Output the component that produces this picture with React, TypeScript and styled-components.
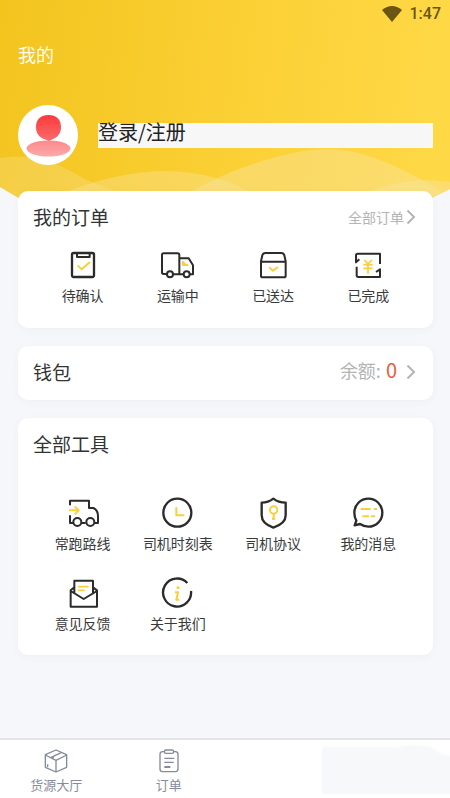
import React from "react";
import styled, { createGlobalStyle } from "styled-components";

const INK = "#2b2b2b";
const GOLD = "#fbce3b";

const GlobalStyle = createGlobalStyle`
  *, *::before, *::after { box-sizing: border-box; }
  body {
    margin: 0;
    background: #f6f7fa;
    color: #333;
    font-family: "Noto Sans CJK SC", "Noto Sans", sans-serif;
  }
  button { font: inherit; color: inherit; border: 0; padding: 0; background: none; cursor: pointer; }
  a { color: inherit; text-decoration: none; }
  h1, h2, ul { margin: 0; padding: 0; font-weight: 400; list-style: none; }
  svg { display: block; flex: none; }
`;

const Page = styled.div`
  min-height: 100vh;
  display: flex;
  flex-direction: column;
  position: relative;
  isolation: isolate;
`;

const Backdrop = styled.svg`
  position: absolute;
  top: 0;
  left: 0;
  width: 100%;
  height: 200px;
  z-index: -1;
`;

const Header = styled.header`
  padding: 0 17px 0 18px;
`;

const StatusBar = styled.div`
  height: 28px;
  margin-right: -8px;
  display: flex;
  align-items: center;
  justify-content: flex-end;
  gap: 8px;
  color: #6b5512;
  font: 500 16px/28px Roboto, sans-serif;
`;

const PageTitle = styled.h1`
  margin-top: 14px;
  font-size: 18px;
  line-height: 24px;
  color: #fffdf0;
`;

const Profile = styled.div`
  margin-top: 39px;
  display: flex;
  align-items: center;
  gap: 20px;
`;

const LoginButton = styled.button`
  flex: 1;
  height: 25px;
  display: flex;
  align-items: flex-start;
  background: #f7f7f7;
  color: #222;
  font-size: 20px;
  line-height: 18px;
`;

const Content = styled.main`
  flex: 1;
  padding: 26px 17px 18px 18px;
  display: flex;
  flex-direction: column;
  gap: 18px;
`;

const Card = styled.section<{ $bottom: number }>`
  padding: 13px 15px ${(p) => p.$bottom}px;
  border-radius: 10px;
  background: #fff;
  box-shadow: 0 2px 8px rgba(60, 70, 90, 0.04);
`;

const CardHead = styled.div`
  display: flex;
  justify-content: space-between;
`;

const CardTitle = styled.h2`
  font-size: 19px;
  line-height: 26px;
  color: #333;
`;

const MoreLink = styled.a<{ $gap: number }>`
  display: flex;
  align-items: center;
  gap: ${(p) => p.$gap}px;
  color: #b4b4b4;
  font-size: 14px;
`;

const Balance = styled.span`
  align-self: flex-start;
  display: flex;
  gap: 5px;
  font-size: 18px;
  line-height: 22px;
`;

const Amount = styled.span`
  color: #ec5b3e;
  font-size: 20px;
`;

const ShortcutGrid = styled.ul<{ $top: number }>`
  margin: ${(p) => p.$top}px 2px 0;
  display: grid;
  grid-template-columns: repeat(4, 1fr);
  row-gap: 24px;
`;

const Shortcut = styled.button`
  width: 100%;
  display: flex;
  flex-direction: column;
  align-items: center;
  gap: 4px;
  font-size: 14px;
  line-height: 18px;
  color: #3a3a3a;
  white-space: nowrap;
`;

const TabBar = styled.nav`
  position: relative;
  height: 60px;
  border-top: 2px solid #e3e5e8;
  background: #fff;
  display: grid;
  grid-template-columns: repeat(4, 1fr);
`;

const Tab = styled.a`
  padding-top: 9px;
  display: flex;
  flex-direction: column;
  align-items: center;
  gap: 2px;
  color: #858b9a;
  font-size: 13px;
  line-height: 20px;
`;

const TabHaze = styled.svg`
  position: absolute;
  top: 4px;
  right: 0;
  width: 30%;
  height: 54px;
`;

function Glyph({ children }: { children: React.ReactNode }) {
  return (
    <svg width="34" height="34" viewBox="0 0 102 102" fill="none" stroke={INK} strokeWidth="7" strokeLinejoin="round" aria-hidden="true">
      {children}
    </svg>
  );
}

function Chevron() {
  return (
    <svg width="12" height="16" viewBox="0 0 12 16" fill="none" stroke="#b4b4b4" strokeWidth="2" aria-hidden="true">
      <path d="M1.5 1.5 8 8l-6.500 6.500" />
    </svg>
  );
}

const orders = [
  {
    label: "待确认",
    icon: (
      <Glyph>
        <rect x="18" y="15" width="66" height="72" rx="5" />
        <path d="M33 15v12h38V15" strokeWidth="6" />
        <path d="M35 52l12 12 25-22" stroke={GOLD} strokeWidth="6" />
      </Glyph>
    ),
  },
  {
    label: "运输中",
    icon: (
      <Glyph>
        <path d="M18 78H8q-5 0-5-5V21q0-5 5-5h42q5 0 5 5v57M36 79h32M55 31h28l13 21v27h-9" strokeWidth="6" />
        <circle cx="27" cy="79" r="9" strokeWidth="6" />
        <circle cx="77" cy="79" r="9" strokeWidth="6" />
        <path d="M66 39v12h16" stroke={GOLD} strokeWidth="6" />
        <path d="M66 39l13 12H66z" fill={GOLD} stroke="none" />
      </Glyph>
    ),
  },
  {
    label: "已送达",
    icon: (
      <Glyph>
        <path d="M15 40l4-18q2-7 9-7h48q7 0 9 7l4 18v43q0 5-5 5H20q-5 0-5-5zM15 41h74" strokeWidth="6" />
        <path d="M40 58l11 10 15-11" stroke={GOLD} strokeWidth="6" />
      </Glyph>
    ),
  },
  {
    label: "已完成",
    icon: (
      <Glyph>
        <path d="M25 34L15 43V22q0-5 5-5h67v31M17 56v26q0 5 5 5h65V64L75 72" strokeWidth="6" />
        <path d="M40 36l11 12 12-12M37 50h28M37 61h28M51 48v29" stroke={GOLD} strokeWidth="5" />
      </Glyph>
    ),
  },
];

const tools = [
  {
    label: "常跑路线",
    icon: (
      <Glyph>
        <path d="M12 28V14h57v22h13q14 6 14 24v21h-9M12 58v23h9M47 81h12" strokeWidth="6" />
        <circle cx="34" cy="78" r="12" strokeWidth="6" />
        <circle cx="73" cy="78" r="12" strokeWidth="6" />
        <path d="M9 43h27M26 31l12 12-12 12" stroke={GOLD} strokeWidth="6" />
      </Glyph>
    ),
  },
  {
    label: "司机时刻表",
    icon: (
      <Glyph>
        <circle cx="49" cy="50" r="42" />
        <path d="M46 34v24h24" stroke={GOLD} strokeWidth="6" />
      </Glyph>
    ),
  },
  {
    label: "司机协议",
    icon: (
      <Glyph>
        <path d="M52 8Q37 20 17 20v38q0 25 35 37 37-12 37-37V20Q67 20 52 8z" />
        <circle cx="53" cy="42" r="11" stroke={GOLD} strokeWidth="6" />
        <path d="M53 53v19M48 68h9" stroke={GOLD} strokeWidth="6" />
      </Glyph>
    ),
  },
  {
    label: "我的消息",
    icon: (
      <Glyph>
        <path d="M27 84q12 8 25 8a42 42 0 1 0-42-42q0 13 6 24l-5 14z" />
        <path d="M29 39h30M69 39h9M34 61h20M60 61h12" stroke={GOLD} strokeWidth="6" />
      </Glyph>
    ),
  },
  {
    label: "意见反馈",
    icon: (
      <Glyph>
        <path d="M25 51V14h56v37M25 34L14 43v49h79V43L81 34M14 45l39 24 40-24" strokeWidth="6" />
        <path d="M36 32h32M36 43h20" stroke={GOLD} strokeWidth="5" />
      </Glyph>
    ),
  },
  {
    label: "关于我们",
    icon: (
      <Glyph>
        <path d="M79 21A42 42 0 1 0 90 45" />
        <path d="M51 31v8" stroke={GOLD} strokeWidth="8" />
        <path d="M42 49h9l-5 22h9" stroke={GOLD} strokeWidth="6" />
      </Glyph>
    ),
  },
];

function Shortcuts({ items, top }: { items: typeof orders; top: number }) {
  return (
    <ShortcutGrid $top={top}>
      {items.map((item) => (
        <li key={item.label}>
          <Shortcut type="button">
            {item.icon}
            {item.label}
          </Shortcut>
        </li>
      ))}
    </ShortcutGrid>
  );
}

function Waves() {
  return (
    <Backdrop viewBox="0 0 450 200" preserveAspectRatio="none" aria-hidden="true">
      <defs>
        <linearGradient id="sun" x1="0" y1="0" x2="1" y2="0.05">
          <stop offset="0" stopColor="#f3c41e" />
          <stop offset="0.55" stopColor="#fbd035" />
          <stop offset="1" stopColor="#ffd846" />
        </linearGradient>
        <clipPath id="edge">
          <path d="M0 0h450v189l-22 11H22L0 187z" />
        </clipPath>
      </defs>
      <g clipPath="url(#edge)">
        <path d="M0 0h450v200H0z" fill="url(#sun)" />
        <g fill="#f8e7a8">
          <path d="M0 158C40 152 66 168 85 179q15 8 40 15v6H0z" fillOpacity="0.28" />
          <path d="M58 195C95 180 130 171 165 171s65 9 90 24z" fillOpacity="0.35" />
          <path d="M185 195C230 168 290 149 328 149c38 0 85 24 118 45v6H185z" fillOpacity="0.4" />
          <path d="M360 196c25-12 55-19 90-14v18h-90z" fillOpacity="0.4" />
        </g>
      </g>
    </Backdrop>
  );
}

function Avatar() {
  return (
    <svg width="60" height="60" viewBox="0 0 60 60" role="img" aria-label="头像">
      <defs>
        <linearGradient id="head" x1="0" y1="0" x2="0" y2="1">
          <stop offset="0" stopColor="#fb3a3c" />
          <stop offset="1" stopColor="#fb6b6c" />
        </linearGradient>
        <linearGradient id="body" x1="0" y1="0" x2="0" y2="1">
          <stop offset="0" stopColor="#fb8a8c" />
          <stop offset="1" stopColor="#fca9aa" />
        </linearGradient>
      </defs>
      <circle cx="30" cy="30" r="30" fill="#fff" />
      <ellipse cx="30.500" cy="43.500" rx="22" ry="8" fill="url(#body)" />
      <path d="M18 22C18 14 23 10 30.500 10S43 14 43 22c0 6-3 10-8 12l-4 2-5-2c-5-2-8-6-8-12z" fill="url(#head)" />
    </svg>
  );
}

export default function App() {
  return (
    <Page>
      <GlobalStyle />
      <Waves />
      <Header>
        <StatusBar>
          <svg width="20" height="16" viewBox="0 0 20 16" fill="currentColor" aria-hidden="true">
            <path d="M0 4Q10-4 20 4L10 16z" />
          </svg>
          <span>1:47</span>
        </StatusBar>
        <PageTitle>我的</PageTitle>
        <Profile>
          <Avatar />
          <LoginButton type="button">登录/注册</LoginButton>
        </Profile>
      </Header>

      <Content>
        <Card $bottom={24}>
          <CardHead>
            <CardTitle>我的订单</CardTitle>
            <MoreLink href="#orders" $gap={2}>
              全部订单
              <Chevron />
            </MoreLink>
          </CardHead>
          <Shortcuts items={orders} top={18} />
        </Card>

        <Card $bottom={15}>
          <CardHead>
            <CardTitle>钱包</CardTitle>
            <MoreLink href="#wallet" $gap={9}>
              <Balance>
                余额: <Amount>0</Amount>
              </Balance>
              <Chevron />
            </MoreLink>
          </CardHead>
        </Card>

        <Card $bottom={23}>
          <CardTitle>全部工具</CardTitle>
          <Shortcuts items={tools} top={39} />
        </Card>
      </Content>

      <TabBar>
        <Tab href="#cargo">
          <svg width="24" height="24" viewBox="0 0 72 72" fill="none" stroke="currentColor" strokeWidth="4" strokeLinejoin="round" aria-hidden="true">
            <path d="M36 3l32 14v38L36 69 4 55V17zM4 18l32 16 32-16M36 34v35M11 46v8" />
            <path d="M20 10M20 26l32-15M27 29q-1-7 8-11" />
          </svg>
          货源大厅
        </Tab>
        <Tab href="#my-orders">
          <svg width="24" height="24" viewBox="0 0 72 72" fill="none" stroke="currentColor" strokeWidth="4" strokeLinejoin="round" aria-hidden="true">
            <path d="M22 8h-5q-8 0-8 8v44q0 8 8 8h38q8 0 8-8V16q0-8-8-8h-5" />
            <rect x="22" y="3" width="28" height="10" rx="5" />
            <path d="M22 28h30M22 40h28" />
            <path d="M22 54h18" strokeWidth="6" />
          </svg>
          订单
        </Tab>
        <TabHaze viewBox="0 0 135 54" preserveAspectRatio="none" aria-hidden="true">
          <defs>
            <filter id="soft">
              <feGaussianBlur stdDeviation="1" />
            </filter>
          </defs>
          <path d="M7 3h75q20-4 34 0l10 7 14 3v37H7z" fill="#f6f8fa" filter="url(#soft)" />
        </TabHaze>
      </TabBar>
    </Page>
  );
}
